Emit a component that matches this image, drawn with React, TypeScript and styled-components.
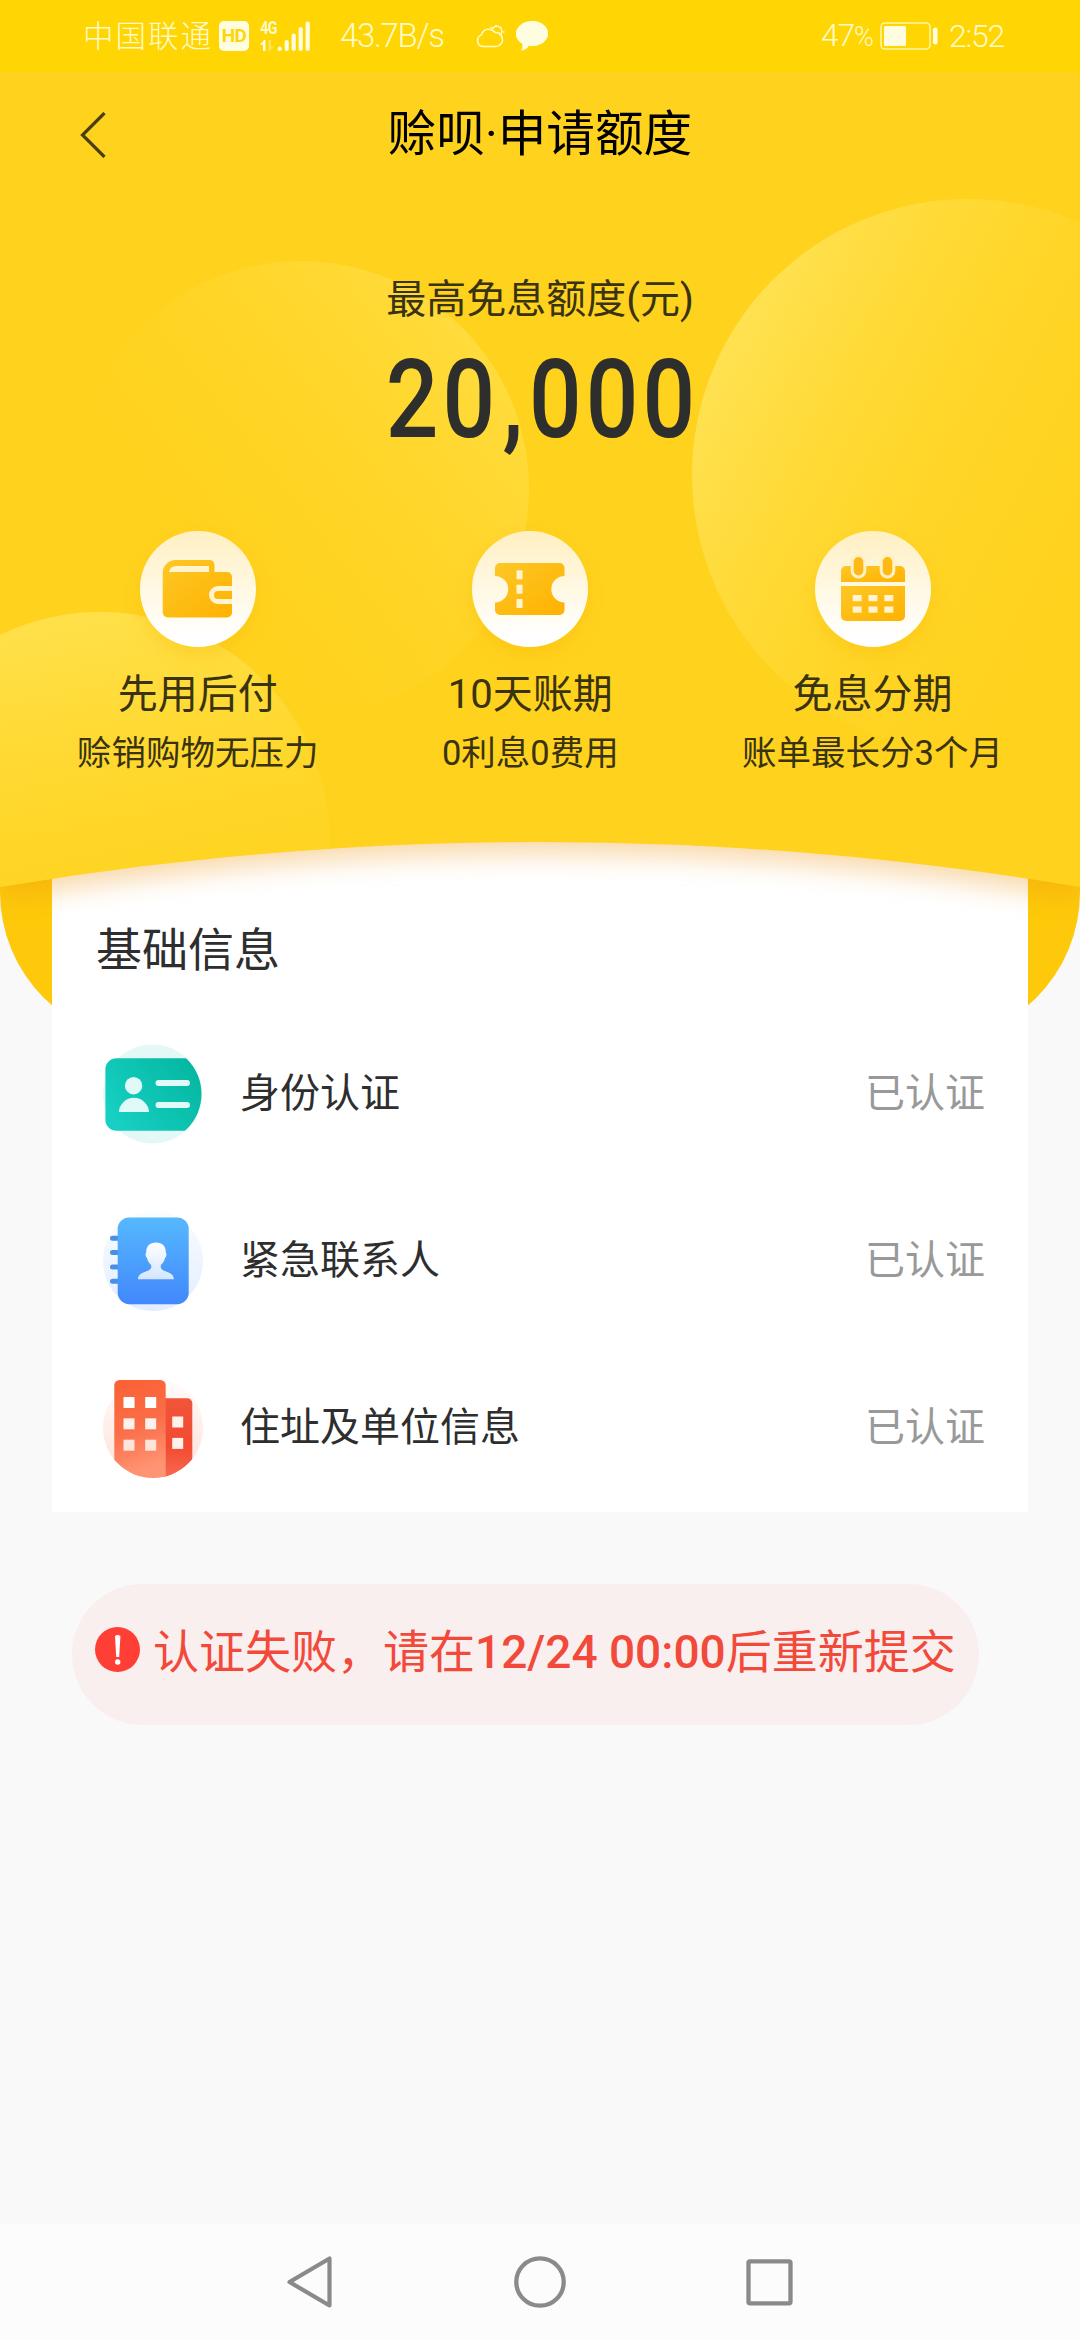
import React from "react";
import styled, { createGlobalStyle } from "styled-components";

const GlobalStyle = createGlobalStyle`
  * { box-sizing: border-box; }
  body {
    margin: 0;
    background: #f9f9f9;
    font-family: Roboto, "Noto Sans CJK SC", sans-serif;
    color: #2e2e2e;
  }
`;

const Page = styled.div`
  display: flex;
  flex-direction: column;
  width: 1080px;
  height: 2340px;
  overflow: hidden;
  background: #f9f9f9;
`;

/* ---------- status bar ---------- */

const StatusBar = styled.header`
  display: flex;
  align-items: center;
  justify-content: space-between;
  height: 72px;
  padding: 0 78px 0 83px;
  background: #ffd504;
  color: #fffbc8;
  position: relative;
  z-index: 3;
`;

const StatusGroup = styled.div`
  display: flex;
  align-items: center;
`;

const Carrier = styled.span`
  width: 136px;
  padding-bottom: 3px;
  font: 300 30.5px/69px "Noto Sans CJK SC", sans-serif;
  letter-spacing: 2px;
  white-space: nowrap;
`;

const HdBadge = styled.span`
  width: 30px;
  height: 30px;
  border-radius: 5px;
  background: #fffde0;
  color: #ffd504;
  font: 700 19px/30px Roboto, sans-serif;
  letter-spacing: -0.6px;
  text-align: center;
`;

const Speed = styled.span`
  width: 106px;
  margin-left: 29px;
  font: 300 33px/72px Roboto, sans-serif;
  letter-spacing: -1.3px;
  white-space: nowrap;
`;

const StatusNumber = styled.span<{ $width: number }>`
  width: ${(p) => p.$width}px;
  font: 300 32px/72px Roboto, sans-serif;
  letter-spacing: -1.2px;
  white-space: nowrap;

  small {
    font-size: 27px;
  }
`;

const Clock = styled(StatusNumber)`
  padding-left: 9px;
`;

const StatusIcon = styled.svg<{ $left: number }>`
  display: block;
  margin-left: ${(p) => p.$left}px;
`;

const Network = styled.div`
  display: flex;
  height: 30px;
  margin-left: 11px;
`;

const NetworkStack = styled.div`
  display: flex;
  flex-direction: column;
  justify-content: space-between;
  width: 15px;
`;

const NetworkType = styled.span`
  width: 24px;
  font: 700 19px/14px Roboto, sans-serif;
  letter-spacing: -1px;
  transform: scaleX(0.76);
  transform-origin: left;
`;

/* ---------- hero ---------- */

const Hero = styled.section`
  position: relative;
  z-index: 2;
  display: flex;
  flex-direction: column;
  height: 815px;
`;

const HeroArt = styled.svg`
  position: absolute;
  left: 0;
  top: 0;
  overflow: visible;
  filter: drop-shadow(0 12px 13px rgba(238, 150, 20, 0.36));
`;

const TitleBar = styled.div`
  position: relative;
  display: grid;
  grid-template-columns: 140px 1fr 140px;
  align-items: center;
  height: 126px;
`;

const BackButton = styled.button`
  display: flex;
  padding: 0 0 0 80px;
  border: 0;
  background: none;
`;

const Title = styled.h1`
  margin: 0;
  font-size: 48.600px;
  font-weight: 400;
  line-height: 64px;
  color: #000;
  text-align: center;
`;

const Quota = styled.div`
  position: relative;
  display: flex;
  flex-direction: column;
  align-items: center;
  padding-top: 74px;
`;

const QuotaLabel = styled.div`
  font-size: 40px;
  line-height: 56px;
  color: #3a3311;
`;

const QuotaValue = styled.div`
  height: 110px;
  margin: 17px -5px 0 0;
  font: 500 109px/110px Roboto, sans-serif;
  letter-spacing: 4.8px;
  color: #2e2e2c;
  transform: scaleX(0.85);
`;

const Comma = styled.span`
  padding: 0 2px 0 4px;
`;

const Features = styled.div`
  position: relative;
  display: flex;
  justify-content: space-between;
  padding: 0 77px;
  margin-top: 76px;
`;

const Feature = styled.div`
  display: flex;
  flex-direction: column;
  align-items: center;
  color: #3a3311;
`;

const FeatureDisc = styled.div`
  width: 116px;
  height: 116px;
  border-radius: 50%;
  background: linear-gradient(#fff0c2, #ffffff 92%);
  box-shadow: 0 8px 18px rgba(250, 180, 0, 0.3);
`;

const FeatureName = styled.div`
  margin-top: 20px;
  font-size: 40px;
  line-height: 56px;
`;

const FeatureNote = styled.div`
  margin-top: 6px;
  font-size: 34.5px;
  line-height: 48px;
`;

/* ---------- form card ---------- */

const CardZone = styled.section`
  position: relative;
  z-index: 1;
  margin-top: -46px;
  padding: 0 52px;
`;

const GoldTail = styled.div`
  position: absolute;
  inset: 0 0 auto;
  height: 201px;
  border-radius: 0 0 150px 150px;
  background: #fdc90a;
`;

const Card = styled.div`
  position: relative;
  height: 671px;
  padding: 77px 43px 0 51px;
  background: #fff;
`;

const CardTitle = styled.h2`
  margin: 0 0 28px -7px;
  font-size: 46px;
  font-weight: 400;
  line-height: 64px;
`;

const Row = styled.div`
  display: flex;
  align-items: center;
  height: 167.3px;
`;

const RowName = styled.span`
  flex: 1;
  margin-left: 37px;
  font-size: 40px;
  line-height: 56px;
`;

const RowState = styled.span`
  font-size: 40px;
  line-height: 56px;
  color: #999;
`;

/* ---------- alert ---------- */

const Alert = styled.div`
  display: flex;
  align-items: flex-start;
  align-self: flex-start;
  width: 907px;
  height: 141px;
  margin: 72px 0 0 72px;
  padding: 43px 0 0 23px;
  border-radius: 71px;
  background: #f9efee;
  color: #f2493b;
`;

const AlertText = styled.p`
  margin: -7px 0 0 12px;
  font-size: 46px;
  line-height: 64px;
  white-space: nowrap;

  b {
    font-weight: 500;
  }
`;

/* ---------- system navigation ---------- */

const NavBar = styled.nav`
  display: flex;
  align-items: center;
  justify-content: space-between;
  height: 116px;
  margin-top: auto;
  padding: 0 286px;
  background: #fcfcfc;
`;

const ink = "url(#amber)";
const paper = "#fff3d0";

const WalletIcon = () => (
  <svg width="116" height="116" viewBox="0 0 116 116">
    <path
      fill={ink}
      d="M36 29H69.500a5 5 0 0 1 5 5V41H87a5 5 0 0 1 5 5V81.500a5 5 0 0 1-5 5H28a5.300 5.300 0 0 1-5.300-5V42a13 13 0 0 1 13.300-13z"
    />
    <path fill={paper} d="M36 35H69V41H29q1-6 7-6z" />
    <path fill="none" stroke={paper} strokeWidth="5" d="M92 57.500H78a6.500 6.500 0 0 0 0 13H92" />
  </svg>
);

const TicketIcon = () => (
  <svg width="116" height="116" viewBox="0 0 116 116">
    <path
      fill={ink}
      d="M28 32H87.500a5 5 0 0 1 5 5V45a13.200 13.200 0 0 0 0 26.400V79a5 5 0 0 1-5 5H28a5 5 0 0 1-5-5V71.400a13.200 13.200 0 0 0 0-26.400V37a5 5 0 0 1 5-5z"
    />
    {[39.300, 53.700, 68].map((y) => (
      <rect key={y} x="44.500" y={y} width="6" height="9" fill={paper} />
    ))}
  </svg>
);

const CalendarIcon = () => (
  <svg width="116" height="116" viewBox="0 0 116 116">
    <path fill={ink} d="M31 35H85a5 5 0 0 1 5 5V51H26V40a5 5 0 0 1 5-5z" />
    <path fill={ink} d="M26 55H90V85a5 5 0 0 1-5 5H31a5 5 0 0 1-5-5z" />
    {[43.500, 72.500].map((x) => (
      <rect
        key={x}
        x={x - 6.300}
        y="24.500"
        width="12.600"
        height="21.500"
        rx="6.300"
        fill="#ffb914"
        stroke="#fff0c6"
        strokeWidth="3"
      />
    ))}
    {[64, 75.500].map((y) =>
      [37.700, 53.500, 69.300].map((x) => (
        <rect key={`${x}-${y}`} x={x} y={y} width="9" height="6.200" fill={paper} />
      ))
    )}
  </svg>
);

const IdCardIcon = () => (
  <svg width="100" height="100" viewBox="0 0 100 100">
    <defs>
      <linearGradient id="teal" x1="0" y1="0.700" x2="1" y2="0.200">
        <stop offset="0" stopColor="#16d0c3" />
        <stop offset="1" stopColor="#02b49c" />
      </linearGradient>
      <clipPath id="idClip">
        <rect width="50" height="100" />
        <circle cx="49.500" cy="50" r="49" />
      </clipPath>
    </defs>
    <circle cx="49.500" cy="50" r="49.500" fill="#e4f8f7" />
    <rect x="2.400" y="14.300" width="110" height="72.400" rx="11" fill="url(#teal)" clipPath="url(#idClip)" />
    <circle cx="30.600" cy="41.700" r="8.700" fill="#dffaf7" />
    <path d="M15.800 68a15.200 15.400 0 0 1 30.300 0z" fill="#dffaf7" />
    <path d="M55.500 39H84M55.500 61H84" stroke="#dffaf7" strokeWidth="6" strokeLinecap="round" />
  </svg>
);

const ContactIcon = () => (
  <svg width="100" height="100" viewBox="0 0 100 100">
    <defs>
      <linearGradient id="blue" x1="0" y1="0" x2="0" y2="1">
        <stop offset="0" stopColor="#56b8ff" />
        <stop offset="1" stopColor="#4288fc" />
      </linearGradient>
      <linearGradient id="blueDisc" x1="0" y1="0" x2="0" y2="1">
        <stop offset="0" stopColor="#fafdff" />
        <stop offset="1" stopColor="#e2edff" />
      </linearGradient>
      <linearGradient id="bust" x1="0" y1="0" x2="0" y2="1">
        <stop offset="0" stopColor="#fff" />
        <stop offset="1" stopColor="#d3e6ff" />
      </linearGradient>
    </defs>
    <circle cx="50" cy="50" r="50" fill="url(#blueDisc)" />
    <path
      d="M9.500 27.200H20M9.500 41.500H20M9.500 55.900H20M9.500 70.200H20"
      stroke="#4a8fe6"
      strokeWidth="5"
      strokeLinecap="round"
    />
    <rect x="14.700" y="6.500" width="71" height="86.700" rx="11.500" fill="url(#blue)" />
    <path
      fill="url(#bust)"
      d="M53 31.500C59.500 31.500 63 35.500 62.800 41.500C64 43 63.400 46 62 47C61.400 50 59.600 52.500 57.800 54V57C60 61.500 70.500 60 71 68.200H34.900C35.400 60 46 61.500 48.200 57V54C46.400 52.500 44.600 50 44 47C42.600 46 42 43 43.200 41.500C43 35.500 46.500 31.500 53 31.500z"
    />
  </svg>
);

const BuildingIcon = () => (
  <svg width="100" height="100" viewBox="0 0 100 100">
    <defs>
      <linearGradient id="tower" x1="0" y1="0" x2="0.200" y2="1">
        <stop offset="0" stopColor="#fa6032" />
        <stop offset="0.550" stopColor="#fb6e49" />
        <stop offset="1" stopColor="#ff9474" />
      </linearGradient>
      <linearGradient id="annex" x1="0" y1="0" x2="0" y2="1">
        <stop offset="0" stopColor="#f0553a" />
        <stop offset="0.600" stopColor="#f24b31" />
        <stop offset="1" stopColor="#f66a50" />
      </linearGradient>
      <linearGradient id="redDisc" x1="0" y1="0" x2="0" y2="1">
        <stop offset="0" stopColor="#fffcfb" />
        <stop offset="1" stopColor="#ffe0d8" />
      </linearGradient>
      <clipPath id="towerClip">
        <rect width="100" height="50" />
        <circle cx="50" cy="50" r="50" />
      </clipPath>
    </defs>
    <circle cx="50" cy="50" r="50" fill="url(#redDisc)" />
    <g clipPath="url(#towerClip)">
      <path fill="url(#annex)" d="M60 20.300H84.300a5 5 0 0 1 5 5V100H60z" />
      <path fill="url(#tower)" d="M16.500 2H57.500a5.200 5.200 0 0 1 5.200 5.200V100H11.300V7.200A5.200 5.200 0 0 1 16.500 2z" />
    </g>
    {[19, 40.300, 61.700].map((y, i) =>
      [20.500, 42.200].map((x) => (
        <rect key={`${x}-${y}`} x={x} y={y} width="11" height="11" fill={["#fff", "#fff1ec", "#ffe4db"][i]} />
      ))
    )}
    {[38.500, 59.900].map((y) => (
      <rect key={y} x="69.200" y={y} width="11" height="11" fill="#fff0ec" />
    ))}
  </svg>
);

const AlertIcon = () => (
  <svg width="46" height="46" viewBox="0 0 46 46">
    <circle cx="22.500" cy="22.500" r="22.500" fill="#ff3f35" />
    <path d="M20 9q2.700-1.800 5.400 0L24.200 30h-3z" fill="#fff" />
    <circle cx="22.700" cy="35" r="2.700" fill="#fff" />
  </svg>
);

const features = [
  { Icon: WalletIcon, name: "先用后付", note: "赊销购物无压力" },
  { Icon: TicketIcon, name: "10天账期", note: "0利息0费用" },
  { Icon: CalendarIcon, name: "免息分期", note: "账单最长分3个月" },
];

const rows = [
  { Icon: IdCardIcon, name: "身份认证" },
  { Icon: ContactIcon, name: "紧急联系人" },
  { Icon: BuildingIcon, name: "住址及单位信息" },
];

export default function App() {
  return (
    <>
      <GlobalStyle />
      <Page>
        <StatusBar>
          <StatusGroup>
            <Carrier>中国联通</Carrier>
            <HdBadge>HD</HdBadge>
            <Network>
              <NetworkStack>
                <NetworkType>4G</NetworkType>
                <svg width="15" height="11" viewBox="0 0 15 11">
                  <path d="M0 5 4 0h1.500v11H3V4.500z" fill="#fffde0" />
                  <path d="M8.500 0H11v6.500h3L9.500 11h-1z" fill="#ffe45c" />
                </svg>
              </NetworkStack>
              <svg width="36" height="30" viewBox="0 0 36 30">
                <g stroke="#fffde0" strokeWidth="4.200" strokeLinecap="round">
                  <path d="M4.700 27.700v.2M11.700 21v6.900M18.700 14.500v13.400M25.700 8v19.900M32.700 2.500v25.400" />
                </g>
              </svg>
            </Network>
            <Speed>43.7B/s</Speed>
            <StatusIcon $left={30} width="30" height="24" viewBox="0 0 30 24" fill="none" stroke="currentColor" strokeWidth="1.500">
              <path d="M7 22.500a6 6 0 0 1-1.500-11.600A7.500 7.500 0 0 1 19 8.500a7 7 0 0 1 4 13q-1.500 1-3 1z" />
              <path d="M16 6a5 5 0 1 1 7.500 5.500M20 1v1.500M14.500 3l1 1M25.500 3l-1 1M28.500 8h-1.500M25.500 13l1 1" />
            </StatusIcon>
            <StatusIcon $left={9} width="34" height="32" viewBox="0 0 34 32">
              <path fill="#fffde0" d="M17 1c9 0 16 5.500 16 12.500S26 26 17 26q-1.500 0-3-.2Q11 30.500 6 30.500 8 28 7.500 24 1 20 1 13.500 1 6.500 17 1z" />
              <ellipse cx="17" cy="13.500" rx="16" ry="12.500" fill="#fffde0" />
            </StatusIcon>
          </StatusGroup>
          <StatusGroup>
            <StatusNumber $width={59}>
              47<small>%</small>
            </StatusNumber>
            <svg width="60" height="28" viewBox="0 0 60 28">
              <rect x="1" y="1" width="49" height="26" rx="4" fill="none" stroke="#fff6a0" strokeWidth="1.600" />
              <rect x="4" y="4" width="22" height="20" rx="1.500" fill="#fffde0" />
              <rect x="53" y="5.500" width="4.500" height="17" rx="2" fill="#fffde0" />
            </svg>
            <Clock $width={62}>2:52</Clock>
          </StatusGroup>
        </StatusBar>

        <Hero>
          <HeroArt width="1080" height="815" viewBox="0 72 1080 815">
            <defs>
              <linearGradient id="amber" x1="0" y1="0" x2="1" y2="1">
                <stop offset="0" stopColor="#fdc726" />
                <stop offset="1" stopColor="#ffb200" />
              </linearGradient>
              <linearGradient id="glowRight" x1="0.050" y1="0.250" x2="0.800" y2="0.650">
                <stop offset="0" stopColor="#ffe35a" stopOpacity="0.900" />
                <stop offset="0.450" stopColor="#ffdc38" stopOpacity="0.550" />
                <stop offset="1" stopColor="#ffd21e" stopOpacity="0" />
              </linearGradient>
              <linearGradient id="glowMiddle" x1="0.900" y1="0.150" x2="0.200" y2="0.700">
                <stop offset="0" stopColor="#ffe04a" stopOpacity="0.750" />
                <stop offset="1" stopColor="#ffd21e" stopOpacity="0" />
              </linearGradient>
              <linearGradient id="glowLeft" x1="0.350" y1="0" x2="0.550" y2="1">
                <stop offset="0" stopColor="#ffe14c" />
                <stop offset="0.450" stopColor="#ffd82c" stopOpacity="0.800" />
                <stop offset="0.900" stopColor="#ffd21e" stopOpacity="0" />
              </linearGradient>
              <clipPath id="heroClip">
                <path d="M0 72H1080V887A3262 3262 0 0 0 0 887z" />
              </clipPath>
            </defs>
            <g clipPath="url(#heroClip)">
              <rect y="72" width="1080" height="815" fill="#ffd21e" />
              <circle cx="968" cy="475" r="276" fill="url(#glowRight)" />
              <circle cx="301" cy="489" r="228" fill="url(#glowMiddle)" />
              <circle cx="100" cy="842" r="230" fill="url(#glowLeft)" />
            </g>
          </HeroArt>

          <TitleBar>
            <BackButton aria-label="返回">
              <svg width="26" height="46" viewBox="0 0 26 46" fill="none">
                <path d="M24.500 1 2.500 23l22 22" stroke="#4a3f0c" strokeWidth="3.200" />
              </svg>
            </BackButton>
            <Title>赊呗·申请额度</Title>
          </TitleBar>

          <Quota>
            <QuotaLabel>最高免息额度(元)</QuotaLabel>
            <QuotaValue>
              20<Comma>,</Comma>000
            </QuotaValue>
          </Quota>

          <Features>
            {features.map(({ Icon, name, note }) => (
              <Feature key={name}>
                <FeatureDisc>
                  <Icon />
                </FeatureDisc>
                <FeatureName>{name}</FeatureName>
                <FeatureNote>{note}</FeatureNote>
              </Feature>
            ))}
          </Features>
        </Hero>

        <CardZone>
          <GoldTail />
          <Card>
            <CardTitle>基础信息</CardTitle>
            {rows.map(({ Icon, name }) => (
              <Row key={name}>
                <Icon />
                <RowName>{name}</RowName>
                <RowState>已认证</RowState>
              </Row>
            ))}
          </Card>
        </CardZone>

        <Alert>
          <AlertIcon />
          <AlertText>
            认证失败，请在<b>12/24 00:00</b>后重新提交
          </AlertText>
        </Alert>

        <NavBar>
          <svg width="48" height="54" viewBox="0 0 48 54" fill="none">
            <path d="M43.500 3.500v47L3.500 27z" stroke="#8a8a8a" strokeWidth="4.200" strokeLinejoin="round" />
          </svg>
          <svg width="54" height="54" viewBox="0 0 54 54" fill="none">
            <circle cx="27" cy="27" r="23.700" stroke="#8a8a8a" strokeWidth="4.300" />
          </svg>
          <svg width="48" height="54" viewBox="0 0 48 54" fill="none">
            <rect x="2.500" y="6.300" width="42" height="42" rx="1.500" stroke="#8a8a8a" strokeWidth="4.300" />
          </svg>
        </NavBar>
      </Page>
    </>
  );
}
